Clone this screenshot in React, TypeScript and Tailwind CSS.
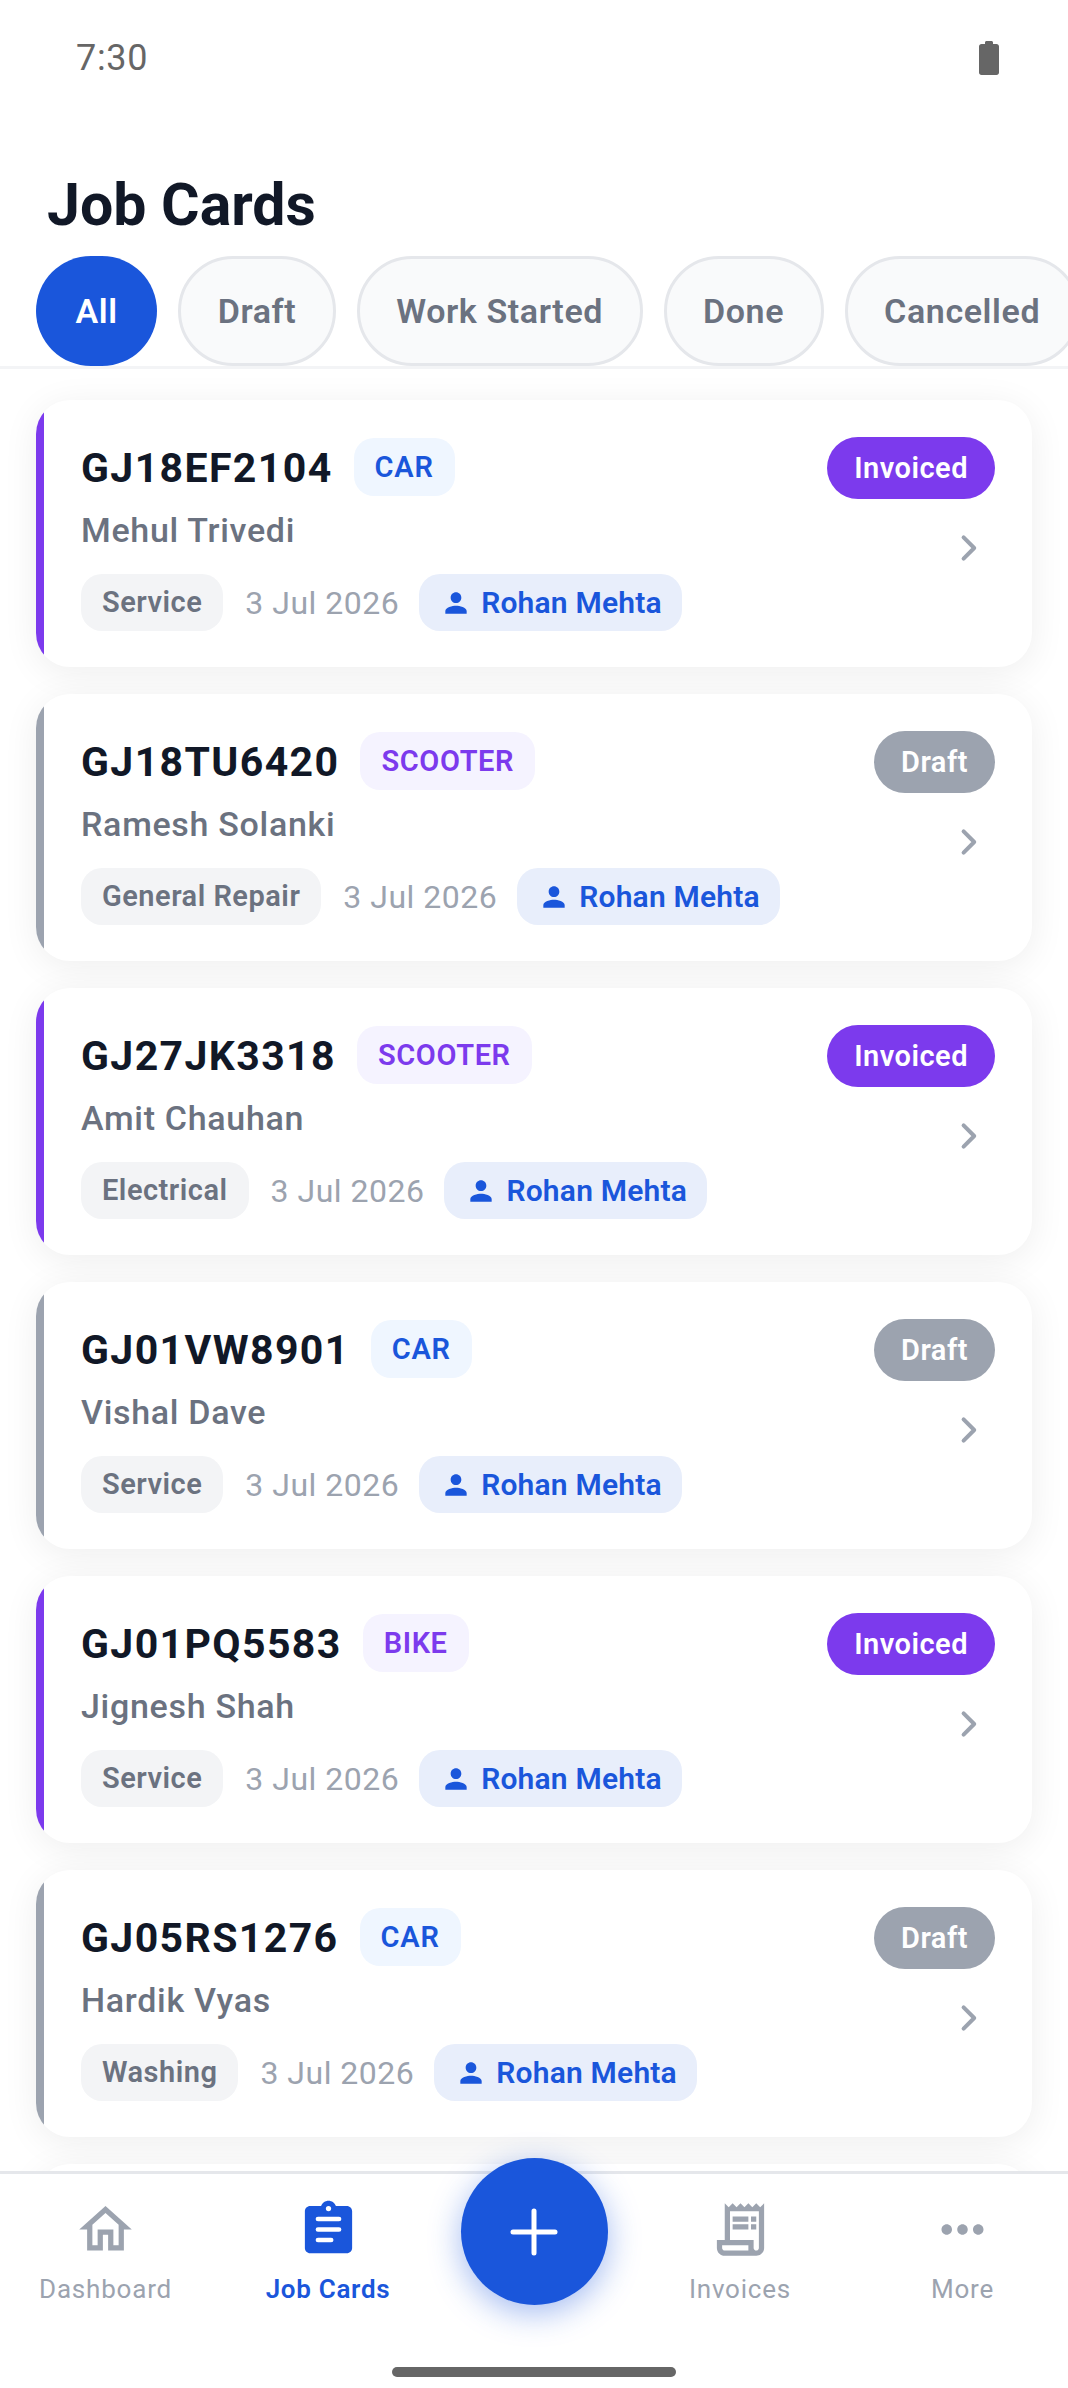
import { MdOutlineHome, MdOutlineReceiptLong, MdMoreHoriz, MdPerson } from "react-icons/md";

type Job = {
  plate: string;
  kind: "CAR" | "SCOOTER" | "BIKE";
  name: string;
  service: string;
  status: "Invoiced" | "Draft";
};

const jobs: Job[] = [
  { plate: "GJ18EF2104", kind: "CAR", name: "Mehul Trivedi", service: "Service", status: "Invoiced" },
  { plate: "GJ18TU6420", kind: "SCOOTER", name: "Ramesh Solanki", service: "General Repair", status: "Draft" },
  { plate: "GJ27JK3318", kind: "SCOOTER", name: "Amit Chauhan", service: "Electrical", status: "Invoiced" },
  { plate: "GJ01VW8901", kind: "CAR", name: "Vishal Dave", service: "Service", status: "Draft" },
  { plate: "GJ01PQ5583", kind: "BIKE", name: "Jignesh Shah", service: "Service", status: "Invoiced" },
  { plate: "GJ05RS1276", kind: "CAR", name: "Hardik Vyas", service: "Washing", status: "Draft" },
];

const filters = ["All", "Draft", "Work Started", "Done", "Cancelled"];

function JobCard({ job }: { job: Job }) {
  const invoiced = job.status === "Invoiced";
  return (
    <div className="flex h-[267px] shrink-0 overflow-hidden rounded-[34px] bg-white shadow-[0_6px_36px_rgba(0,0,0,0.07)]">
      <div className={`w-[8px] shrink-0 ${invoiced ? "bg-[#7c3aed]" : "bg-[#9ca3af]"}`}></div>
      <div className="flex flex-1 justify-between pb-[36px] pl-[37px] pr-[37px] pt-[37px]">
        <div className="flex flex-col">
          <div className="mt-[1px] flex h-[58px] items-center gap-[21px]">
            <span className="pt-[2px] text-[41px] font-bold leading-none tracking-[1.4px] text-[#111827]">{job.plate}</span>
            {job.kind === "CAR" ? (
              <span className="flex h-[58px] items-center rounded-[20px] bg-[#eff6ff] px-[21px] pt-[2px] text-[29px] font-semibold tracking-[0.8px] text-[#1a56db]">
                {job.kind}
              </span>
            ) : (
              <span className="flex h-[58px] items-center rounded-[20px] bg-[#f5f3ff] px-[21px] pt-[2px] text-[29px] font-semibold tracking-[0.6px] text-[#7c3aed]">
                {job.kind}
              </span>
            )}
          </div>
          <div className="mt-[14px] text-[34px] font-medium leading-[40px] tracking-[0.7px] text-[#6b7280]">{job.name}</div>
          <div className="mt-[24px] flex h-[57px] items-center">
            <span className="flex h-[57px] items-center rounded-[21px] bg-[#f3f4f6] px-[21px] text-[29px] font-semibold tracking-[0.5px] text-[#6b7280]">
              {job.service}
            </span>
            <span className="ml-[22px] text-[32px] leading-none tracking-[0.5px] text-[#9ca3af]">3 Jul 2026</span>
            <span className="ml-[20px] flex h-[57px] items-center gap-[9px] rounded-[21px] bg-[#e8eefb] pl-[21px] pr-[20px] text-[30px] font-semibold tracking-[0.2px] text-[#1a56db]">
              <MdPerson size={32} className="shrink-0" />
              Rohan Mehta
            </span>
          </div>
        </div>
        <div className="flex flex-col items-end">
          {invoiced ? (
            <span className="flex h-[62px] items-center rounded-full bg-[#7c3aed] px-[27px] pt-[2px] text-[29px] font-semibold tracking-[0.5px] text-white">
              {job.status}
            </span>
          ) : (
            <span className="flex h-[62px] items-center rounded-full bg-[#9ca3af] px-[27px] pt-[2px] text-[29px] font-semibold tracking-[0.5px] text-white">
              {job.status}
            </span>
          )}
          <svg className="mr-[2px] mt-[25px]" width="48" height="48" viewBox="0 0 24 24" fill="none" stroke="#9ca3af" strokeWidth="2" strokeLinecap="round" strokeLinejoin="round">
            <path d="M9.3 6.7 14.6 12l-5.3 5.3" />
          </svg>
        </div>
      </div>
    </div>
  );
}

function NavItem({ label, active, children }: { label: string; active?: boolean; children: React.ReactNode }) {
  return (
    <div className="flex flex-col items-center pt-[24px]">
      <div className="flex h-[63px] w-[63px] items-center justify-center">{children}</div>
      <span
        className={
          active
            ? "mt-[12px] text-[26px] font-semibold leading-[32px] tracking-[0.7px] text-[#1a56db]"
            : "mt-[12px] text-[26px] leading-[32px] tracking-[0.8px] text-[#9ca3af]"
        }
      >
        {label}
      </span>
    </div>
  );
}

export default function App() {
  return (
    <div className="flex h-[2388px] w-[1068px] flex-col overflow-hidden bg-white font-['Roboto',sans-serif]">
      {/* status bar */}
      <div className="flex h-[116px] shrink-0 items-center justify-between pl-[76px] pr-[69px]">
        <span className="text-[36px] leading-none tracking-[0.7px] text-[#666666]">7:30</span>
        <svg width="20" height="34" viewBox="0 0 20 34" fill="#666666">
          <path d="M6 3V1.500C6 .7 6.700 0 7.500 0h5c.8 0 1.500.7 1.500 1.500V3h3.500C18.900 3 20 4.100 20 5.500v26c0 1.400-1.100 2.500-2.500 2.500h-15C1.100 34 0 32.900 0 31.500v-26C0 4.100 1.100 3 2.500 3z" />
        </svg>
      </div>

      {/* header */}
      <h1 className="pl-[47px] pt-[56px] text-[59px] font-bold leading-[65px] text-[#111827]">Job Cards</h1>
      <div className="mt-[19px] flex h-[113px] shrink-0 gap-[21px] overflow-hidden border-b-[3px] border-[#f3f4f6] pl-[36px]">
        {filters.map((f) =>
          f === "All" ? (
            <div key={f} className="flex h-[110px] shrink-0 items-center rounded-full bg-[#1a56db] px-[39.5px] pt-[1px] text-[34px] font-semibold tracking-[0.6px] text-white">
              {f}
            </div>
          ) : (
            <div key={f} className="flex h-[110px] shrink-0 items-center rounded-full border-[3px] border-[#e5e7eb] bg-[#f9fafb] px-[36.5px] pt-[1px] text-[34px] font-semibold tracking-[0.6px] text-[#6b7280]">
              {f}
            </div>
          ),
        )}
      </div>

      {/* list, the next card only peeks out above the nav */}
      <div className="flex min-h-0 flex-1 flex-col gap-[27px] overflow-hidden px-[36px] pt-[31px]">
        {jobs.map((job) => (
          <JobCard key={job.plate} job={job} />
        ))}
        <div className="h-[267px] shrink-0 rounded-[34px] bg-white shadow-[0_6px_36px_rgba(0,0,0,0.07)]"></div>
      </div>

      {/* bottom nav */}
      <div className="h-[217px] shrink-0 border-t-[3px] border-[#e5e7eb] bg-white">
        <div className="grid grid-cols-[211px_234px_178px_234px_211px]">
          <NavItem label="Dashboard">
            <MdOutlineHome size={63} color="#9ca3af" />
          </NavItem>
          <NavItem label="Job Cards" active>
            <svg width="63" height="63" viewBox="0 0 24 24">
              <path
                fill="#1a56db"
                d="M19 3h-4.180C14.400 1.840 13.300 1 12 1s-2.400.84-2.820 2H5c-1.100 0-2 .9-2 2v14c0 1.100.9 2 2 2h14c1.100 0 2-.9 2-2V5c0-1.100-.9-2-2-2z"
              />
              <circle cx="12" cy="4" r="1" fill="#fff" />
              <path d="M8 8h8M8 12h8M8 16h5" stroke="#fff" strokeWidth="1.800" strokeLinecap="round" />
            </svg>
          </NavItem>
          <div className="flex justify-center">
            <button className="-mt-[16px] flex h-[147px] w-[147px] items-center justify-center rounded-full bg-[#1a56db] shadow-[0_8px_32px_rgba(26,86,219,0.4)]">
              <svg width="48" height="48" viewBox="0 0 48 48" stroke="#fff" strokeWidth="5" strokeLinecap="round">
                <path d="M24 3v42M3 24h42" />
              </svg>
            </button>
          </div>
          <NavItem label="Invoices">
            <MdOutlineReceiptLong size={63} color="#9ca3af" />
          </NavItem>
          <NavItem label="More">
            <MdMoreHoriz size={63} color="#9ca3af" />
          </NavItem>
        </div>
        <div className="mx-auto mt-[62px] h-[10px] w-[284px] rounded-full bg-[#666666]"></div>
      </div>
    </div>
  );
}
